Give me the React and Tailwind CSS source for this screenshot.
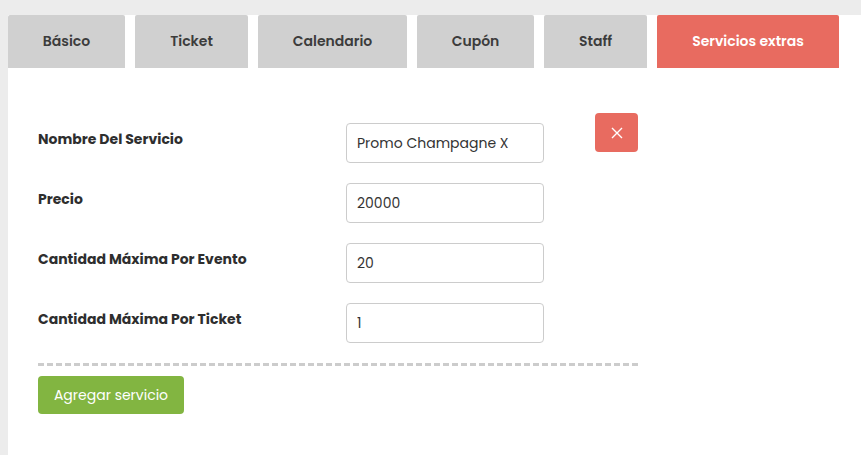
import React, { useState } from 'react';

const tabs = [
  { label: 'Básico', width: 'w-[117px]' },
  { label: 'Ticket', width: 'w-[113px]' },
  { label: 'Calendario', width: 'w-[149px]' },
  { label: 'Cupón', width: 'w-[117px]' },
  { label: 'Staff', width: 'w-[103px]' },
  { label: 'Servicios extras', width: 'w-[182px]' },
];

const fields = [
  { label: 'Nombre Del Servicio', value: 'Promo Champagne X' },
  { label: 'Precio', value: '20000' },
  { label: 'Cantidad Máxima Por Evento', value: '20' },
  { label: 'Cantidad Máxima Por Ticket', value: '1' },
];

function App() {
  const [active, setActive] = useState(5);

  return (
    <div className="min-h-[455px] bg-[#ececec] pt-[15px] pl-2 font-['Poppins','Open_Sans',sans-serif]">
      <div className="bg-white min-h-[440px]">
        <div className="flex gap-[10px]">
          {tabs.map((tab, i) => (
            <button
              key={tab.label}
              onClick={() => setActive(i)}
              className={`${tab.width} h-[53px] rounded-t-[2px] text-[14px] font-semibold ${
                i === active ? 'bg-[#e86b60] text-white' : 'bg-[#d0d0d0] text-[#3c3c3c]'
              }`}
            >
              {tab.label}
            </button>
          ))}
        </div>

        <div className="px-[30px] pt-[45px]">
          <div className="flex">
            <div className="flex flex-col gap-5 pt-[10px]">
              {fields.map((field) => (
                <div key={field.label} className="flex items-start">
                  <label className="w-[308px] pt-[6px] text-[14px] font-bold text-[#2e2e2e]">
                    {field.label}
                  </label>
                  <input
                    defaultValue={field.value}
                    className="w-[198px] h-[40px] border border-[#cccccc] rounded-[4px] px-[10px] text-[14px] text-[#333] outline-none"
                  />
                </div>
              ))}
            </div>
            <div className="ml-[51px]">
              <button className="w-[43px] h-[39px] rounded-[4px] bg-[#e86b60] flex items-center justify-center">
                <svg width="12" height="12" viewBox="0 0 12 12" fill="none" stroke="white" strokeWidth="1.4">
                  <path d="M1 1L11 11M11 1L1 11" />
                </svg>
              </button>
            </div>
          </div>

          <div className="w-[600px] mt-5 border-t-[3px] border-dashed border-[#cccccc]"></div>

          <button className="mt-[10px] w-[146px] h-[38px] rounded-[4px] bg-[#82b541] text-white text-[14px]">
            Agregar servicio
          </button>
        </div>
      </div>
    </div>
  );
}

export default App;
